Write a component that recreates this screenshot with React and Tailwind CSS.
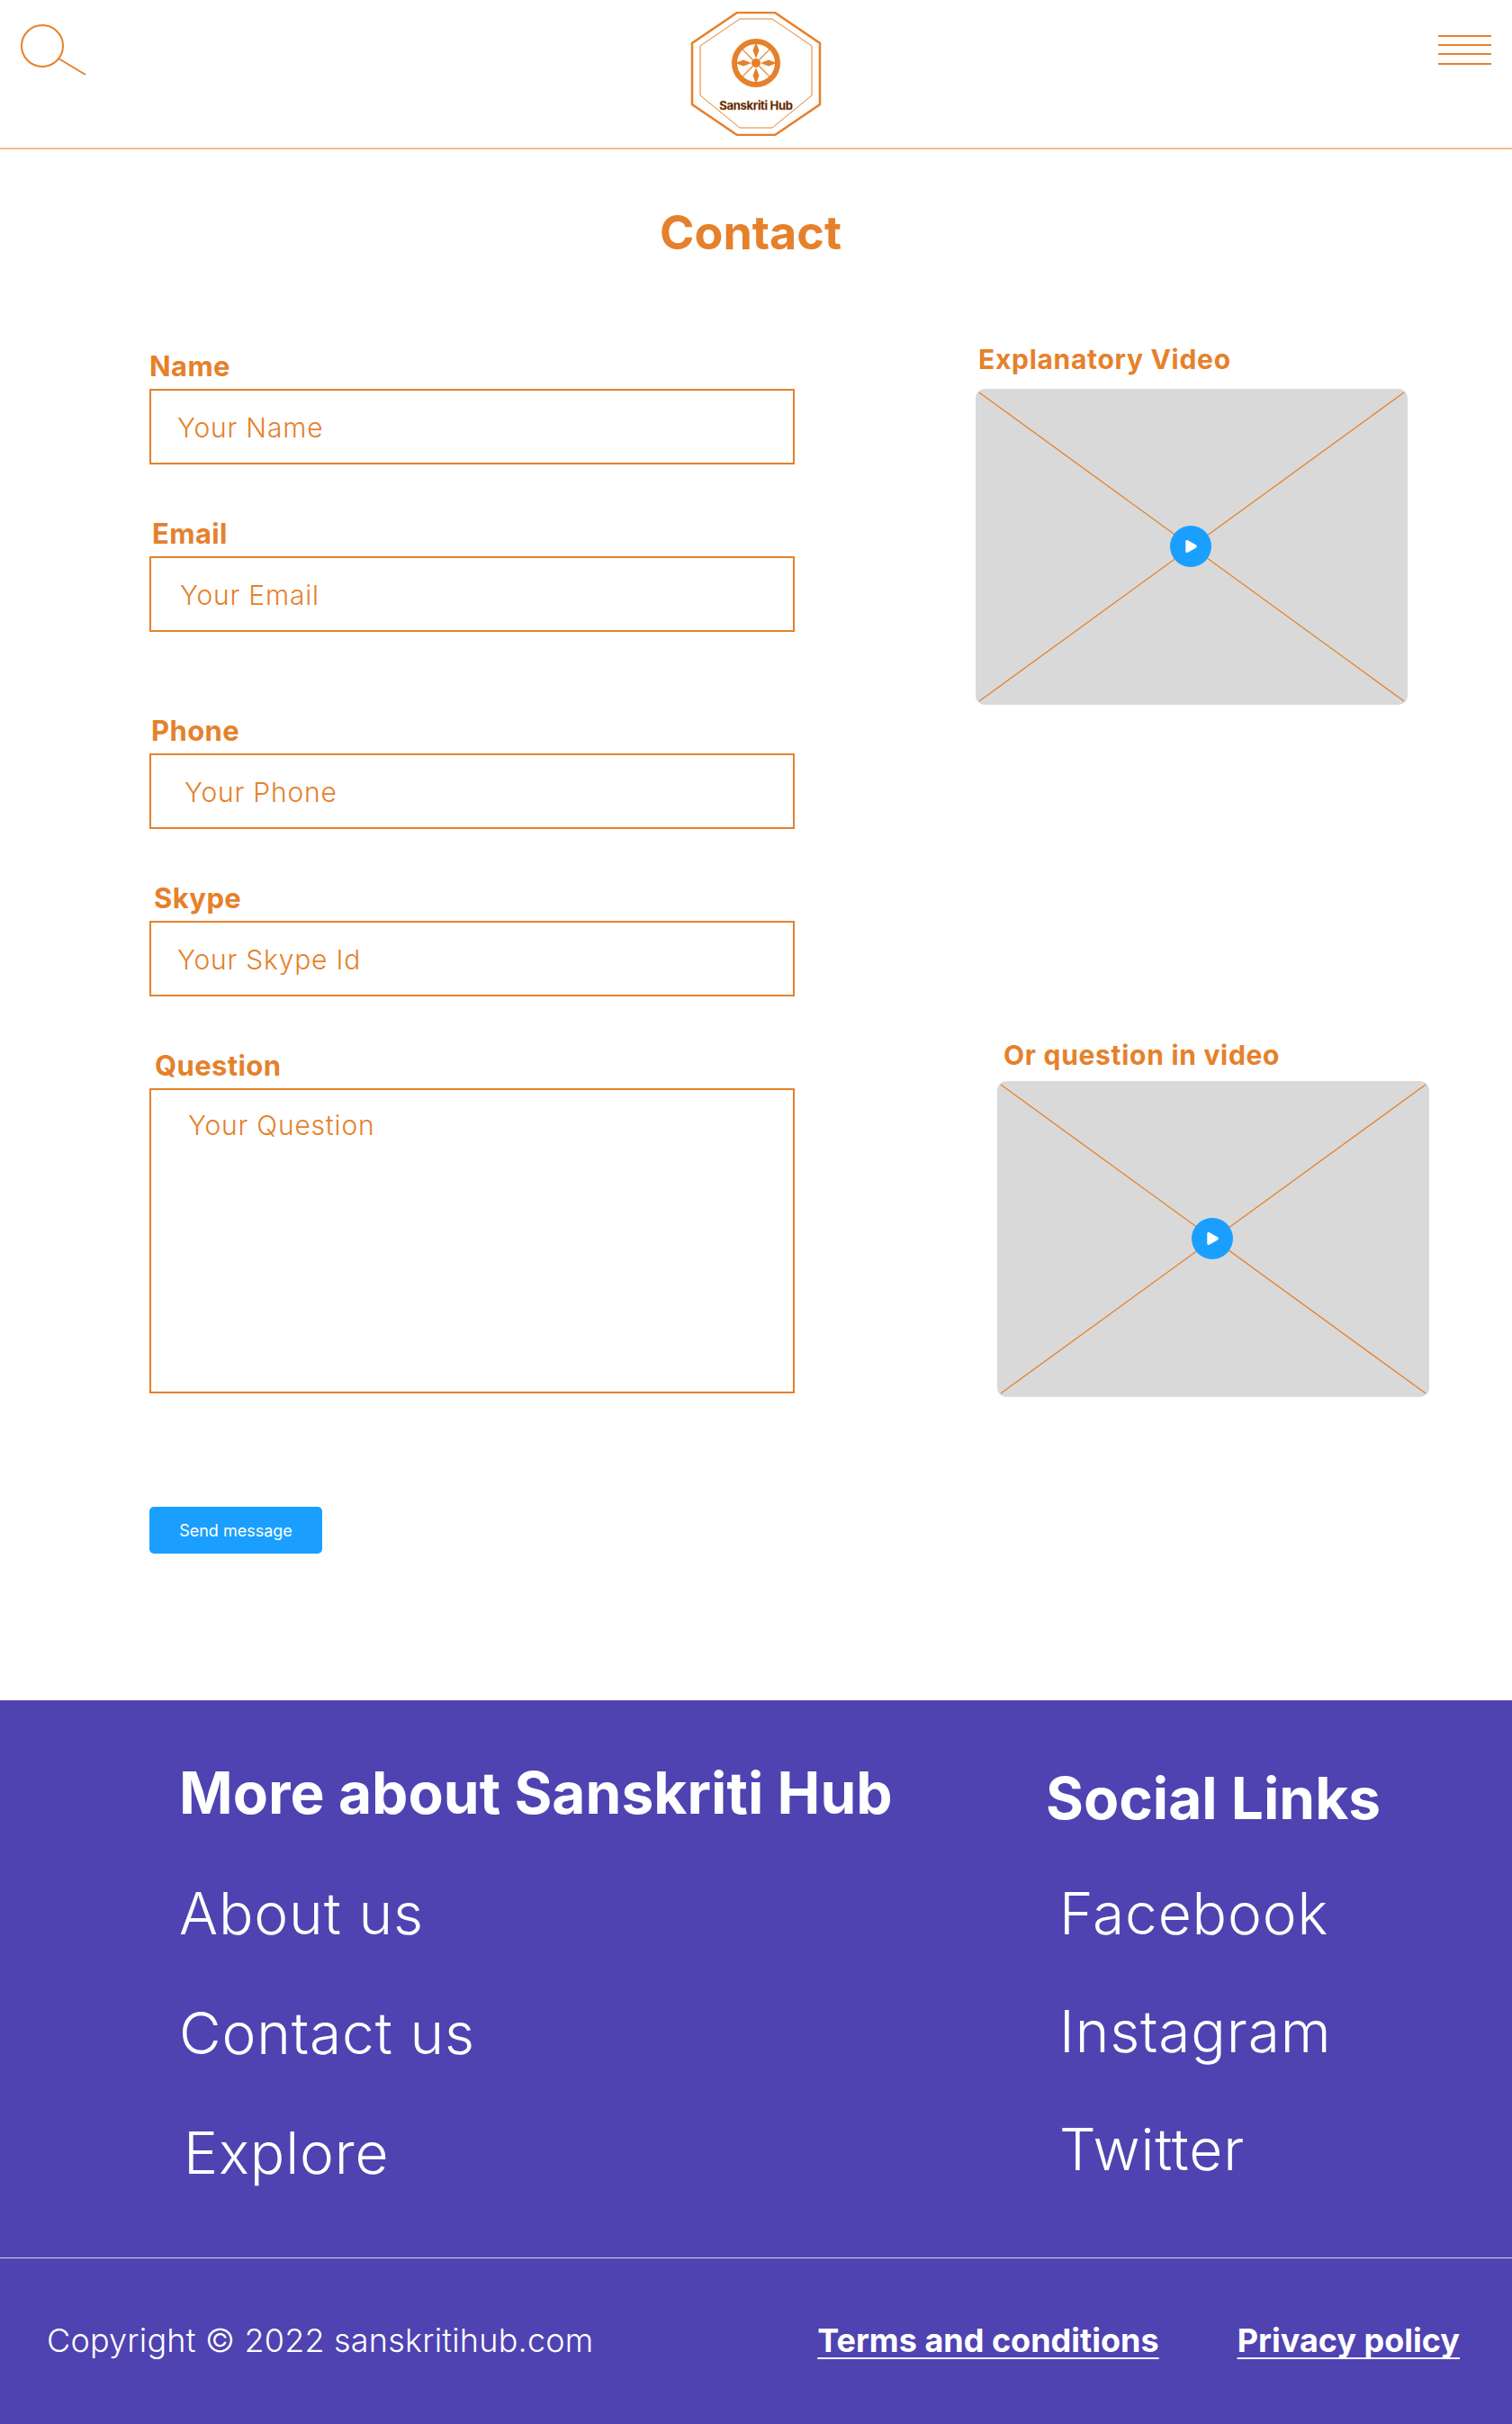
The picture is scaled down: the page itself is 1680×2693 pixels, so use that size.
import React from 'react';

const orange = 'text-[#e5812b]';

const SearchIcon = () => (
  <svg width="76" height="60" viewBox="0 0 76 60" fill="none" stroke="#e5812b" strokeWidth="2">
    <circle cx="25" cy="24" r="23" />
    <line x1="43" y1="38" x2="73" y2="56" />
  </svg>
);

const MenuIcon = () => (
  <div className="flex flex-col gap-[8px] w-[59px]">
    <div className="h-[2px] bg-[#e5812b]" />
    <div className="h-[2px] bg-[#e5812b]" />
    <div className="h-[2px] bg-[#e5812b]" />
    <div className="h-[2px] bg-[#e5812b] mt-[1px]" />
  </div>
);

const spokes = [0, 45, 90, 135, 180, 225, 270, 315];

const Logo = () => (
  <svg width="146" height="138" viewBox="0 0 146 138" fill="none">
    <polygon points="52,1 94,1 144,35 144,103 94,137 52,137 2,103 2,35" stroke="#e5812b" strokeWidth="2.5" />
    <polygon points="55,8 91,8 135,38 135,93 91,129 55,129 11,93 11,38" stroke="#e5812b" strokeWidth="1" />
    <circle cx="73" cy="57" r="24" stroke="#e5812b" strokeWidth="6" />
    <circle cx="73" cy="57" r="5" fill="#e5812b" />
    {spokes.map((a) => (
      a % 90 === 0 ? (
        <path key={a} d="M73 34 L76.500 43 L73 52 L69.500 43 Z" fill="#e5812b" transform={`rotate(${a} 73 57)`} />
      ) : (
        <line key={a} x1="73" y1="36" x2="73" y2="52" stroke="#e5812b" strokeWidth="1.2" transform={`rotate(${a} 73 57)`} />
      )
    ))}
    <text x="73" y="109" textAnchor="middle" fontFamily="Inter, sans-serif" fontSize="13" fontWeight="700" fill="#3b2410" stroke="#e5812b" strokeWidth="0.3" letterSpacing="-0.3">Sanskriti Hub</text>
  </svg>
);

const Field = ({ label, placeholder, labelClass, textClass, boxClass }) => (
  <div className={boxClass}>
    <div className={`text-[31px] leading-[36px] font-bold tracking-[0.4px] ${orange} ${labelClass}`}>{label}</div>
    <div className={`h-[84px] mt-[7px] pt-[2px] border-2 border-[#e5812b] flex items-center text-[30px] font-[350] tracking-[0.8px] ${orange} ${textClass}`}>
      {placeholder}
    </div>
  </div>
);

const Video = ({ title, titleClass, boxClass, gapClass }) => (
  <div className={boxClass}>
    <div className={`text-[30px] leading-[36px] font-bold tracking-[0.7px] ${orange} ${titleClass}`}>{title}</div>
    <div className={`relative w-[480px] h-[351px] rounded-[10px] bg-[#d9d9d9] overflow-hidden ${gapClass}`}>
      <svg className="absolute inset-0" width="480" height="351" viewBox="0 0 480 351">
        <line x1="4" y1="4" x2="476" y2="347" stroke="#e5812b" strokeWidth="1.3" />
        <line x1="476" y1="4" x2="4" y2="347" stroke="#e5812b" strokeWidth="1.3" />
      </svg>
      <div className="absolute left-[216px] top-[152px] w-[46px] h-[46px] rounded-full bg-[#1b9fff] flex items-center justify-center">
        <svg width="16" height="16" viewBox="0 0 14 14" fill="#fff">
          <path d="M2 2.500c0-1.300 1-1.900 2.200-1.300l7.800 4.300c1.200.7 1.200 2.300 0 3l-7.800 4.300c-1.200.6-2.200 0-2.200-1.300z" />
        </svg>
      </div>
    </div>
  </div>
);

const FooterLink = ({ children, className }) => (
  <div className={`text-[64px] leading-[78px] font-light text-white tracking-[0.85px] ${className}`}>{children}</div>
);

export default function App() {
  return (
    <div className="w-[1680px] h-[2693px] bg-white flex flex-col font-['Inter',sans-serif] overflow-hidden">
      {/* header */}
      <header className="h-[166px] shrink-0 border-b-2 border-[#f2bd8a] flex justify-between px-[22px]">
        <div className="pt-[27px]"><SearchIcon /></div>
        <div className="pt-[13px] -ml-[16px]"><Logo /></div>
        <div className="pt-[39px] pr-[1px]"><MenuIcon /></div>
      </header>

      {/* contact */}
      <main className="h-[1723px] shrink-0 relative">
        <h1 className={`text-[52px] leading-[60px] font-bold text-center pr-[12px] mt-[63px] ${orange}`}>Contact</h1>
        <div className="flex mt-[100px]">
          <div className="ml-[166px] w-[717px] shrink-0">
            <Field label="Name" placeholder="Your Name" textClass="pl-[29px]" />
            <Field label="Email" placeholder="Your Email" boxClass="mt-[59px]" labelClass="pl-[3px]" textClass="pl-[32px]" />
            <Field label="Phone" placeholder="Your Phone" boxClass="mt-[92px]" labelClass="pl-[2px]" textClass="pl-[37px]" />
            <Field label="Skype" placeholder="Your Skype Id" boxClass="mt-[59px]" labelClass="pl-[5px]" textClass="pl-[29px]" />
            <div className="mt-[59px]">
              <div className={`text-[31px] leading-[36px] font-bold tracking-[0.4px] pl-[6px] ${orange}`}>Question</div>
              <div className={`h-[339px] mt-[7px] border-2 border-[#e5812b] pl-[41px] pt-[21px] text-[30px] leading-[36px] font-[350] tracking-[0.8px] ${orange}`}>
                Your Question
              </div>
            </div>
            <button className="mt-[126px] w-[192px] h-[52px] rounded-[5px] bg-[#1b9fff] text-white text-[18px]">Send message</button>
          </div>
          <div className="ml-[201px] -mt-[8px]">
            <Video title="Explanatory Video" titleClass="pl-[3px]" gapClass="mt-[15px]" />
            <Video title="Or question in video" titleClass="pl-[7px]" boxClass="ml-[24px] mt-[371px]" gapClass="mt-[11px]" />
          </div>
        </div>
      </main>

      {/* footer */}
      <footer className="flex-1 bg-[#4f43b2] flex flex-col">
        <div className="h-[619px] shrink-0 flex pt-[64px]">
          <div className="ml-[199px] w-[963px] shrink-0">
            <h2 className="text-[64px] leading-[78px] font-bold text-white tracking-[0.05px]">More about Sanskriti Hub</h2>
            <FooterLink className="mt-[56px]">About us</FooterLink>
            <FooterLink className="mt-[55px]">Contact us</FooterLink>
            <FooterLink className="mt-[55px] pl-[5px]">Explore</FooterLink>
          </div>
          <div className="pt-[6px]">
            <h2 className="text-[64px] leading-[78px] font-bold text-white">Social Links</h2>
            <FooterLink className="mt-[50px] pl-[15px]">Facebook</FooterLink>
            <FooterLink className="mt-[53px] pl-[15px]">Instagram</FooterLink>
            <FooterLink className="mt-[53px] pl-[15px]">Twitter</FooterLink>
          </div>
        </div>
        <div className="h-[1px] bg-[#d8d4ee]" />
        <div className="flex-1 flex items-center pl-[52px] pb-[3px] text-white text-[36px]">
          <div className="font-light tracking-[0.2px]">Copyright © 2022 sanskritihub.com</div>
          <div className="ml-auto flex gap-[87px] pr-[58px] font-bold">
            <span className="underline underline-offset-[6px] decoration-2 [text-decoration-skip-ink:none]">Terms and conditions</span>
            <span className="underline underline-offset-[6px] decoration-2 [text-decoration-skip-ink:none]">Privacy policy</span>
          </div>
        </div>
      </footer>
    </div>
  );
}
